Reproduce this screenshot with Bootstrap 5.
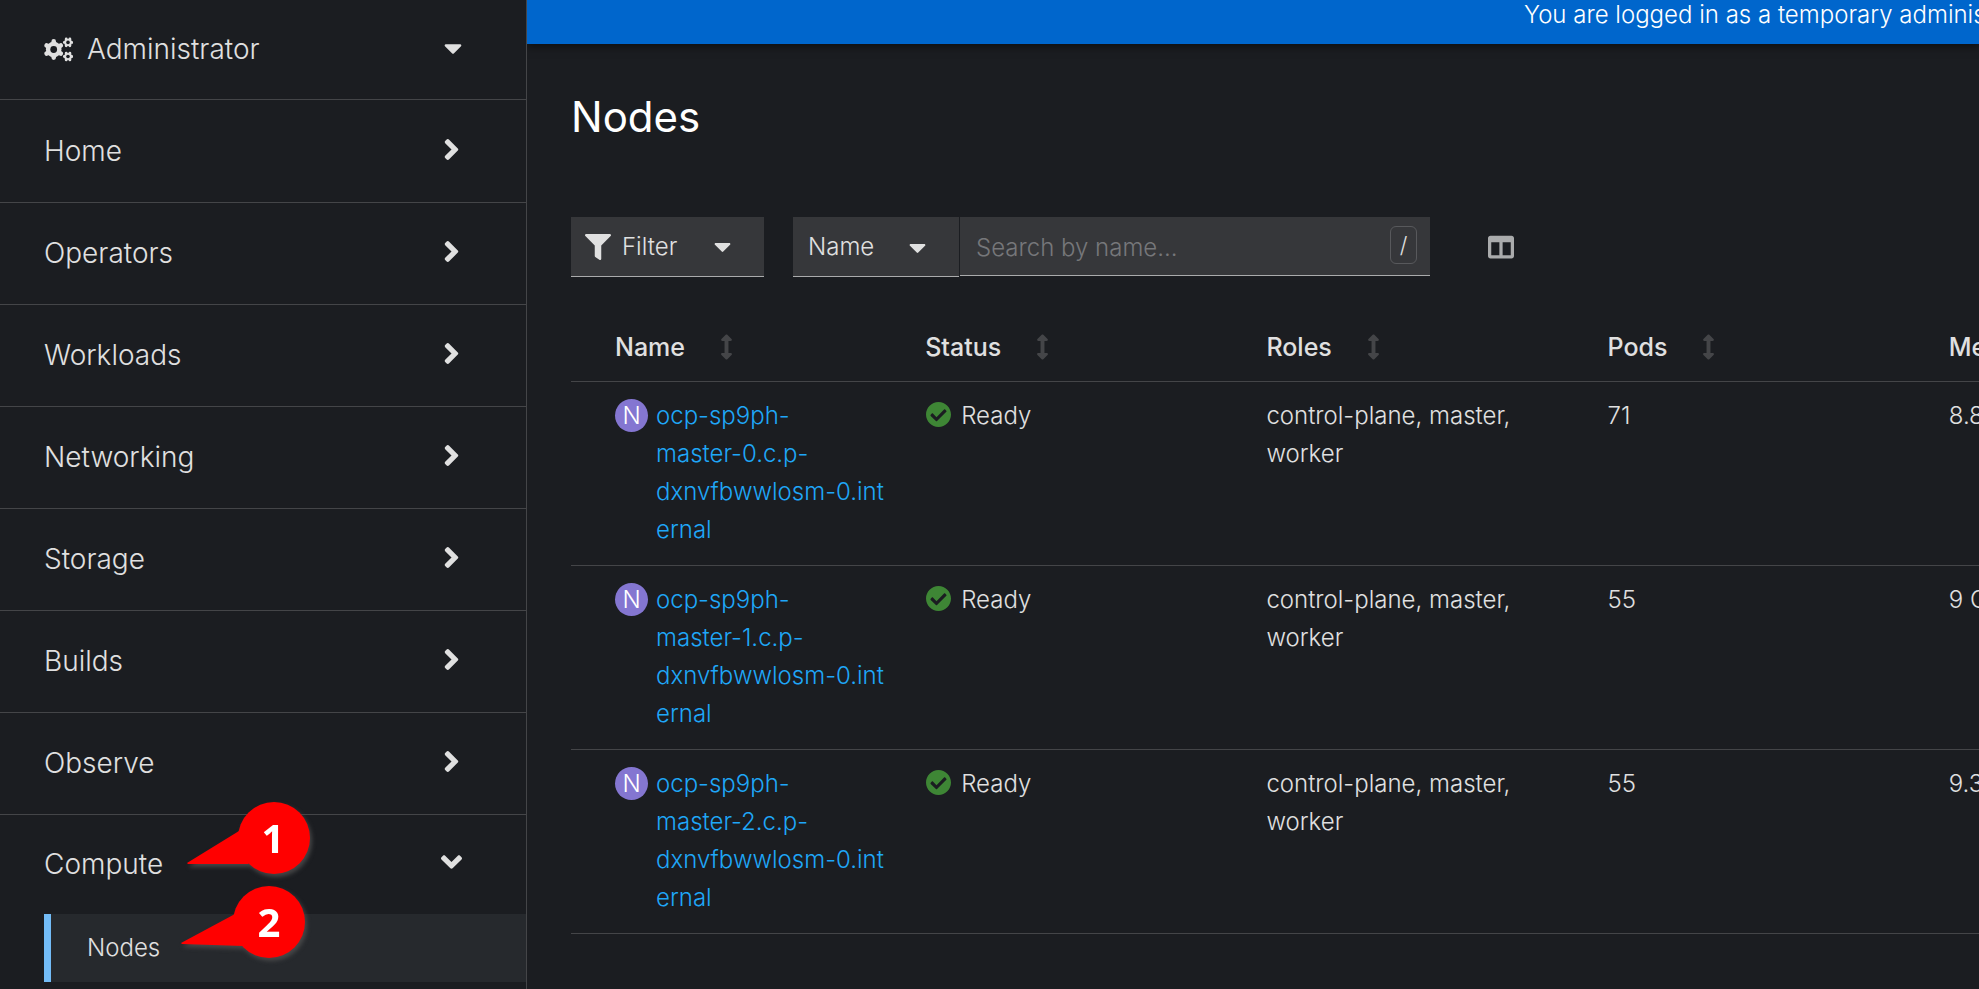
<!DOCTYPE html>
<html lang="en">
<head>
<meta charset="utf-8">
<meta name="viewport" content="width=device-width, initial-scale=1">
<title>Nodes</title>
<link href="https://cdn.jsdelivr.net/npm/bootstrap@5.3.0/dist/css/bootstrap.min.css" rel="stylesheet">
<style>
  :root { --line: #444548; --ink: #e0e0e0; --field: #36373a; --page: #1b1d21; }
  body { background: var(--page); color: var(--ink); font-family: Inter, "Liberation Sans", sans-serif; font-size: 24px; font-weight: 300; line-height: 38px; overflow-x: hidden; }
  svg { display: block; flex: none; fill: currentColor; }

  .console-side { width: 527px; border-right: 1px solid var(--line); }
  .side-btn { width: 100%; display: flex; align-items: center; background: none; border: 0; color: inherit; font-size: 28px; font-weight: 300; line-height: 42px; text-align: left; padding: 28px 64px 29px 44px; }
  .perspective { border-bottom: 1px solid var(--line); }
  .perspective svg:first-child { margin-right: 14px; }
  .perspective svg:last-child { margin-left: auto; }
  .side-list { padding-top: 1px; }
  .side-list > li { position: relative; }
  .side-list .side-btn { padding: 29px 67px 30px 44px; justify-content: space-between; }
  .side-list .side-btn svg { margin-bottom: 4px; }
  .side-list > li:not(:last-child) { border-bottom: 1px solid var(--line); }
  .side-list > li:last-child .side-btn { padding: 28px 64px 29px 44px; }
  .side-sub { margin-left: 44px; }
  .side-sub a { position: relative; display: block; background: #26292d; border-left: 7px solid #73bcf7; padding: 15px 36px; color: inherit; text-decoration: none; }

  .callout-pin { position: absolute; pointer-events: none; filter: drop-shadow(2px 3px 2px rgba(80,80,80,.8)); }
  .callout-pin text { font: 700 40px "Open Sans", "Noto Sans", sans-serif; fill: #fff; text-anchor: middle; }
  .pin-one { left: 186px; top: -15px; }
  .pin-two { left: 129px; top: -30px; }

  .console-main { min-width: 0; overflow: hidden; }
  .login-banner { background: #06c; color: #fff; line-height: 30px; padding: 0 0 14px 997px; white-space: nowrap; box-shadow: 0 3px 8px rgba(0,0,0,.5); }
  .page-body { padding: 46px 0 0 44px; }
  h1 { color: #fff; font-size: 42px; font-weight: 400; line-height: 54px; margin: 0 0 73px; }

  .tool-btn, .tool-select, .tool-search { background-color: var(--field); border: 0; border-bottom: 1px solid #aaabac; border-radius: 0; color: var(--ink); font-size: 24px; font-weight: 300; line-height: 38px; height: 60px; }
  .tool-btn { width: 193px; display: flex; align-items: center; gap: 11px; padding: 1px 33px 0 14px; }
  .tool-btn svg:last-child { margin-left: auto; }
  .tool-group { margin-left: 29px; }
  .tool-select { width: 166px; padding: 1px 44px 0 15px; appearance: none; background-image: url("data:image/svg+xml,%3Csvg xmlns='http://www.w3.org/2000/svg' viewBox='0 192 320 170'%3E%3Cpath fill='%23e0e0e0' d='M31.3 192h257.3c17.8 0 26.7 21.5 14.1 34.1L174.1 354.8c-7.8 7.8-20.5 7.8-28.3 0L17.2 226.1C4.6 213.5 13.5 192 31.3 192z'/%3E%3C/svg%3E"); background-repeat: no-repeat; background-size: 17px 9px; background-position: right 33px top 27px; }
  .search-wrap { position: relative; width: 470px; margin-left: 1px; }
  .tool-search { width: 100%; height: 59px; padding: 2px 60px 0 16px; outline: 0; }
  .tool-search::placeholder { color: #76777a; opacity: 1; }
  .search-wrap kbd { position: absolute; right: 13px; top: 9px; width: 27px; height: 38px; border: 1px solid #58595c; border-radius: 6px; background: none; color: var(--ink); font: 300 22px/36px Inter, sans-serif; text-align: center; padding: 0; }
  .col-btn { background: none; border: 0; color: #aaabac; padding: 17px 0; margin-left: 58px; }

  .node-table { table-layout: fixed; width: 1706px; margin-top: 24px; border-collapse: collapse; }
  .node-table tr { border-bottom: 1px solid var(--line); }
  .node-table th { font-weight: 500; padding: 27px 13px 15px; }
  .node-table td { vertical-align: top; padding: 15px 13px 16px; }
  .node-table th:first-child, .node-table td:first-child { padding-left: 44px; padding-right: 20px; }
  .sort-btn { display: flex; align-items: center; gap: 36px; border: 0; padding: 0; background: none; color: inherit; font-size: 25px; font-weight: 500; line-height: 38px; white-space: nowrap; }
  .sort-btn svg { color: #444548; }
  .node-badge { flex: none; width: 33px; height: 33px; margin: 2px 8px 0 0; border-radius: 50%; background: #8476d1; color: #fff; line-height: 33px; text-align: center; }
  .node-table a { color: #1fa7f8; text-decoration: none; overflow-wrap: anywhere; min-width: 0; }
  .state { display: flex; align-items: center; gap: 10px; }
  .state svg { color: #3e8635; margin: 0 0 3px 1px; }
</style>
</head>
<body>
<svg width="0" height="0" class="position-absolute" aria-hidden="true">
  <symbol id="caret" viewBox="0 192 320 170"><path d="M31.3 192h257.3c17.8 0 26.7 21.5 14.1 34.1L174.1 354.8c-7.8 7.8-20.5 7.8-28.3 0L17.2 226.1C4.6 213.5 13.5 192 31.3 192z"/></symbol>
  <symbol id="angle" viewBox="24 96 208 320"><path d="M224.3 273l-136 136c-9.4 9.4-24.6 9.4-33.9 0l-22.6-22.6c-9.4-9.4-9.4-24.6 0-33.9l96.4-96.4-96.4-96.4c-9.4-9.4-9.4-24.6 0-33.9L54.3 103c9.4-9.4 24.6-9.4 33.9 0l136 136c9.5 9.4 9.5 24.6.1 34z"/></symbol>
  <symbol id="sort" viewBox="16 0 224 512"><path d="M214.059 377.941H168V134.059h46.059c21.382 0 32.09-25.851 16.971-40.971L144.971 7.029c-9.373-9.373-24.568-9.373-33.941 0L24.971 93.088c-15.119 15.119-4.411 40.971 16.971 40.971H88v243.882H41.941c-21.382 0-32.09 25.851-16.971 40.971l86.059 86.059c9.373 9.373 24.568 9.373 33.941 0l86.059-86.059c15.12-15.119 4.412-40.971-16.97-40.971z"/></symbol>
  <symbol id="ok" viewBox="8 8 496 496"><path d="M504 256c0 136.967-111.033 248-248 248S8 392.967 8 256 119.033 8 256 8s248 111.033 248 248zM227.314 387.314l184-184c6.248-6.248 6.248-16.379 0-22.627l-22.627-22.627c-6.248-6.249-16.379-6.249-22.628 0L216 308.118l-70.059-70.059c-6.248-6.248-16.379-6.248-22.628 0l-22.627 22.627c-6.248 6.248-6.248 16.379 0 22.627l104 104c6.249 6.249 16.379 6.249 22.628.001z"/></symbol>
</svg>

<div class="d-flex min-vh-100">
  <nav class="console-side flex-shrink-0" aria-label="Main">
    <div class="perspective">
      <button class="side-btn" type="button">
        <svg width="29" height="25" viewBox="0 0 29 25" stroke="currentColor" stroke-linecap="round">
          <g stroke-width="4.6"><path d="M9.700 4.400v16.200M2.700 8.450l14 8.100M16.700 8.450l-14 8.100"/></g>
          <circle cx="9.700" cy="12.500" r="7.800" stroke="none"/><circle cx="9.700" cy="12.500" r="3.400" fill="#1b1d21" stroke="none"/>
          <g stroke-width="2.800"><path d="M22.200 2v6.800M25.900 2v6.800M20.300 5.400h7.600M22.200 16.100v6.800M25.900 16.100v6.800M20.300 19.500h7.600"/></g>
          <circle cx="24" cy="5.400" r="3.600" stroke="none"/><circle cx="24" cy="5.400" r="1.800" fill="#1b1d21" stroke="none"/>
          <circle cx="24" cy="19.500" r="3.600" stroke="none"/><circle cx="24" cy="19.500" r="1.800" fill="#1b1d21" stroke="none"/>
        </svg>
        Administrator
        <svg width="18" height="10"><use href="#caret"/></svg>
      </button>
    </div>
    <ul class="side-list list-unstyled mb-0">
      <li><button class="side-btn" type="button">Home<svg width="15" height="21"><use href="#angle"/></svg></button></li>
      <li><button class="side-btn" type="button">Operators<svg width="15" height="21"><use href="#angle"/></svg></button></li>
      <li><button class="side-btn" type="button">Workloads<svg width="15" height="21"><use href="#angle"/></svg></button></li>
      <li><button class="side-btn" type="button">Networking<svg width="15" height="21"><use href="#angle"/></svg></button></li>
      <li><button class="side-btn" type="button">Storage<svg width="15" height="21"><use href="#angle"/></svg></button></li>
      <li><button class="side-btn" type="button">Builds<svg width="15" height="21"><use href="#angle"/></svg></button></li>
      <li><button class="side-btn" type="button">Observe<svg width="15" height="21"><use href="#angle"/></svg></button></li>
      <li>
        <button class="side-btn" type="button" aria-expanded="true">Compute
          <svg width="21" height="14" viewBox="96 152 320 208"><path transform="matrix(0 1 -1 0 512 0)" d="M352.300 273l-136 136c-9.400 9.400-24.600 9.400-33.900 0l-22.600-22.600c-9.400-9.400-9.400-24.600 0-33.900l96.400-96.400-96.400-96.400c-9.400-9.400-9.400-24.600 0-33.900L182.300 103c9.400-9.400 24.600-9.400 33.900 0l136 136c9.500 9.400 9.500 24.600.1 34z"/></svg>
        </button>
        <svg class="callout-pin pin-one" width="126" height="76"><g fill="#f00"><circle cx="88" cy="38" r="36"/><path d="M1 63L53 31 88 38 62 64H2z"/></g><text x="87" y="53">1</text></svg>
        <ul class="side-sub list-unstyled mb-0">
          <li><a href="#" aria-current="page">Nodes
            <svg class="callout-pin pin-two" width="128" height="76"><g fill="#f00"><circle cx="89" cy="38" r="36"/><path d="M1 59L55 30 89 38 63 62 2 60z"/></g><text x="89" y="53">2</text></svg>
          </a></li>
        </ul>
      </li>
    </ul>
  </nav>

  <main class="console-main flex-grow-1">
    <div class="login-banner" role="status">You are logged in as a temporary administrative user.</div>
    <div class="page-body">
      <h1>Nodes</h1>
      <div class="d-flex align-items-start">
        <button class="tool-btn" type="button">
          <svg width="26" height="26" viewBox="0 0 512 512"><path d="M487.976 0H24.028C2.710 0-8.047 25.866 7.058 40.971L192 225.941V432c0 7.831 3.821 15.170 10.237 19.662l80 55.980C298.020 518.690 320 507.493 320 487.980V225.941l184.947-184.970C520.021 25.896 509.338 0 487.976 0z"/></svg>
          Filter
          <svg width="17" height="9"><use href="#caret"/></svg>
        </button>
        <div class="tool-group d-flex align-items-start">
          <select class="tool-select" aria-label="Search field"><option>Name</option></select>
          <div class="search-wrap">
            <input class="tool-search" type="text" placeholder="Search by name..." aria-label="Search by name">
            <kbd>/</kbd>
          </div>
        </div>
        <button class="col-btn" type="button" aria-label="Manage columns">
          <svg width="26" height="26" viewBox="0 0 512 512"><path d="M464 32H48C21.490 32 0 53.490 0 80v352c0 26.510 21.490 48 48 48h416c26.510 0 48-21.490 48-48V80c0-26.510-21.490-48-48-48zM224 416H64V160h160v256zm224 0H288V160h160v256z"/></svg>
        </button>
      </div>

      <table class="node-table">
        <thead>
          <tr>
            <th scope="col"><button class="sort-btn" type="button">Name<svg width="11" height="26"><use href="#sort"/></svg></button></th>
            <th scope="col"><button class="sort-btn" type="button">Status<svg width="11" height="26"><use href="#sort"/></svg></button></th>
            <th scope="col"><button class="sort-btn" type="button">Roles<svg width="11" height="26"><use href="#sort"/></svg></button></th>
            <th scope="col"><button class="sort-btn" type="button">Pods<svg width="11" height="26"><use href="#sort"/></svg></button></th>
            <th scope="col"><button class="sort-btn" type="button">Memory</button></th>
          </tr>
        </thead>
        <tbody>
          <tr>
            <td><div class="d-flex align-items-start"><span class="node-badge">N</span><a href="#">ocp-sp9ph-master-&NoBreak;0.c.p-dxnvfbwwlosm-&NoBreak;0.internal</a></div></td>
            <td><div class="state"><svg width="25" height="25"><use href="#ok"/></svg>Ready</div></td>
            <td>control-plane, master, worker</td><td>71</td><td>8.8 GiB</td>
          </tr>
          <tr>
            <td><div class="d-flex align-items-start"><span class="node-badge">N</span><a href="#">ocp-sp9ph-master-&NoBreak;1.c.p-dxnvfbwwlosm-&NoBreak;0.internal</a></div></td>
            <td><div class="state"><svg width="25" height="25"><use href="#ok"/></svg>Ready</div></td>
            <td>control-plane, master, worker</td><td>55</td><td>9 GiB</td>
          </tr>
          <tr>
            <td><div class="d-flex align-items-start"><span class="node-badge">N</span><a href="#">ocp-sp9ph-master-&NoBreak;2.c.p-dxnvfbwwlosm-&NoBreak;0.internal</a></div></td>
            <td><div class="state"><svg width="25" height="25"><use href="#ok"/></svg>Ready</div></td>
            <td>control-plane, master, worker</td><td>55</td><td>9.3 GiB</td>
          </tr>
        </tbody>
      </table>
    </div>
  </main>
</div>
<script src="https://cdn.jsdelivr.net/npm/bootstrap@5.3.0/dist/js/bootstrap.bundle.min.js"></script>
</body>
</html>
